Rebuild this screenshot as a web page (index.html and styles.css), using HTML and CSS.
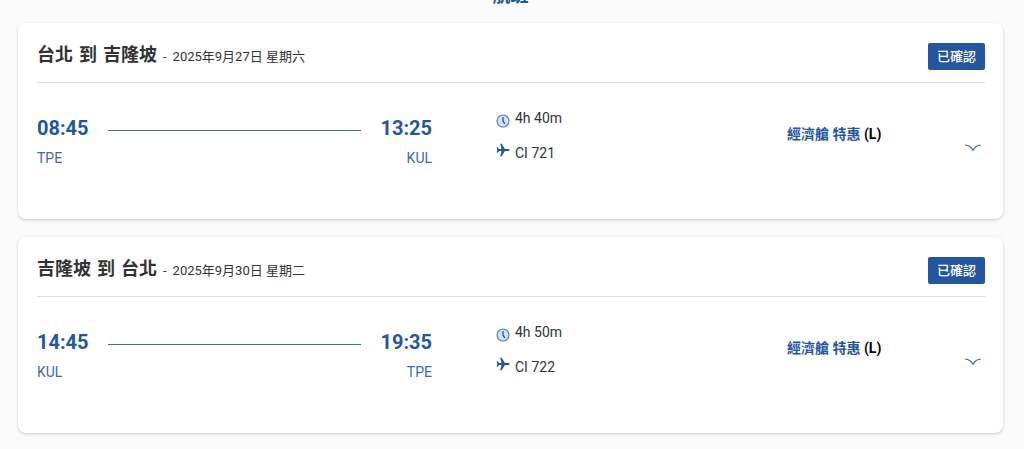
FILE: index.html
```html
<!DOCTYPE html>
<html lang="zh-Hant">
<head>
    <meta charset="UTF-8">
    <meta name="viewport" content="width=device-width, initial-scale=1.0">
    <title>航班</title>
    <link rel="stylesheet" href="styles.css">
</head>
<body>
    <svg width="0" height="0" class="icon-defs" aria-hidden="true">
        <symbol id="icon-clock" viewBox="0 0 14 14">
            <circle cx="7" cy="7" r="6" fill="#d5e1f1" stroke="#5b82b9" stroke-width="1.2"/>
            <path d="M7 3v4.2l1.8 2.6" fill="none" stroke="#24559f" stroke-width="1.3"/>
        </symbol>
        <symbol id="icon-plane" viewBox="0 0 14 14">
            <path d="M13.6 7c0 .6-.8 1-1.700 1H8.900l-3.200 5.200H4.200L5.500 8H3L1.800 9.700H.6L1.300 7 .6 4.300h1.200L3 6h2.500L4.200.8h1.500L8.900 6h3c.9 0 1.700.4 1.700 1z" fill="#24559f"/>
        </symbol>
        <symbol id="icon-chevron" viewBox="0 0 16 8">
            <path d="M.3 1.200C3.500 1.300 6.500 3.500 8 6.200 9.500 3.500 12.500 1.300 15.700 1.200" fill="none" stroke="#3a6bb0" stroke-width="1.200"/>
        </symbol>
    </svg>

    <main class="trip">
        <h1 class="trip-title">航班</h1>

        <section class="flight-card">
            <header class="flight-header">
                <h2 class="flight-cities"><span>台北</span><span>到</span><span>吉隆坡</span></h2>
                <span class="flight-dash">-</span>
                <span class="flight-date">2025年9月27日 星期六</span>
                <span class="flight-status">已確認</span>
            </header>
            <div class="flight-body">
                <div class="route">
                    <div class="stop">
                        <div class="time">08:45</div>
                        <div class="airport">TPE</div>
                    </div>
                    <div class="route-line"></div>
                    <div class="stop arrival">
                        <div class="time">13:25</div>
                        <div class="airport">KUL</div>
                    </div>
                </div>
                <div class="details">
                    <div class="detail"><svg class="icon"><use href="#icon-clock"/></svg>4h 40m</div>
                    <div class="detail plane"><svg class="icon"><use href="#icon-plane"/></svg>CI 721</div>
                </div>
                <div class="fare"><span class="fare-name">經濟艙 特惠</span> (L)</div>
                <button class="toggle" type="button" aria-label="展開"><svg><use href="#icon-chevron"/></svg></button>
            </div>
        </section>

        <section class="flight-card">
            <header class="flight-header">
                <h2 class="flight-cities"><span>吉隆坡</span><span>到</span><span>台北</span></h2>
                <span class="flight-dash">-</span>
                <span class="flight-date">2025年9月30日 星期二</span>
                <span class="flight-status">已確認</span>
            </header>
            <div class="flight-body">
                <div class="route">
                    <div class="stop">
                        <div class="time">14:45</div>
                        <div class="airport">KUL</div>
                    </div>
                    <div class="route-line"></div>
                    <div class="stop arrival">
                        <div class="time">19:35</div>
                        <div class="airport">TPE</div>
                    </div>
                </div>
                <div class="details">
                    <div class="detail"><svg class="icon"><use href="#icon-clock"/></svg>4h 50m</div>
                    <div class="detail plane"><svg class="icon"><use href="#icon-plane"/></svg>CI 722</div>
                </div>
                <div class="fare"><span class="fare-name">經濟艙 特惠</span> (L)</div>
                <button class="toggle" type="button" aria-label="展開"><svg><use href="#icon-chevron"/></svg></button>
            </div>
        </section>
    </main>
</body>
</html>
```
FILE: styles.css
```css
* {
    box-sizing: border-box;
}
body {
    margin: 0;
    background-color: #fafafa;
    color: #333;
    font-family: Roboto, "Noto Sans CJK TC", sans-serif;
    font-size: 14px;
    line-height: 20px;
}
.icon-defs {
    position: absolute;
}
.trip {
    padding: 0 21px 0 18px;
}
/* scrolled partly out of view */
.trip-title {
    margin: -16px 0 15px;
    color: #24559f;
    font-size: 18px;
    line-height: 24px;
    text-align: center;
}
.flight-card {
    margin-bottom: 18px;
    padding: 20px 18px 41px 19px;
    background-color: #fff;
    border-radius: 8px;
    box-shadow: 0 1px 3px rgba(0, 0, 0, 0.2);
}
.flight-header {
    display: flex;
    align-items: baseline;
    gap: 6px;
    padding-bottom: 12px;
    border-bottom: 1px solid #ddd;
}
.flight-cities {
    display: flex;
    gap: 6px;
    margin: 0;
    font-size: 18px;
    line-height: 24px;
}
.flight-date,
.flight-dash {
    font-size: 13px;
}
.flight-status {
    align-self: center;
    margin-left: auto;
    padding: 3px 9px;
    background-color: #24559f;
    border-radius: 2px;
    color: #fff;
    font-size: 13px;
    font-weight: 500;
    line-height: 21px;
}
.flight-body {
    display: grid;
    grid-template-columns: 5fr 4fr 2fr 1fr;
    padding-top: 25px;
}
.route {
    display: flex;
    gap: 19px;
}
.time {
    color: #24559f;
    font-size: 20px;
    font-weight: bold;
    line-height: 40px;
}
.airport {
    color: #3a6bb0;
}
.arrival {
    text-align: right;
}
.route-line {
    flex: 1;
    height: 1px;
    margin-top: 22px;
    background-color: #3a6bb0;
}
.details {
    padding-left: 64px;
}
.detail {
    display: flex;
    align-items: flex-end;
    gap: 5px;
    margin-bottom: 15px;
}
.detail.plane {
    align-items: flex-start;
}
.icon {
    width: 14px;
    height: 14px;
}
.fare {
    padding: 16px 0 0 39px;
    color: #000;
    font-weight: bold;
    white-space: nowrap;
}
.fare-name {
    color: #24559f;
}
.toggle {
    align-self: start;
    justify-self: end;
    margin: 36px 4px 0 0;
    padding: 0;
    background: none;
    border: none;
    cursor: pointer;
}
.toggle svg {
    display: block;
    width: 16px;
    height: 8px;
}
```
